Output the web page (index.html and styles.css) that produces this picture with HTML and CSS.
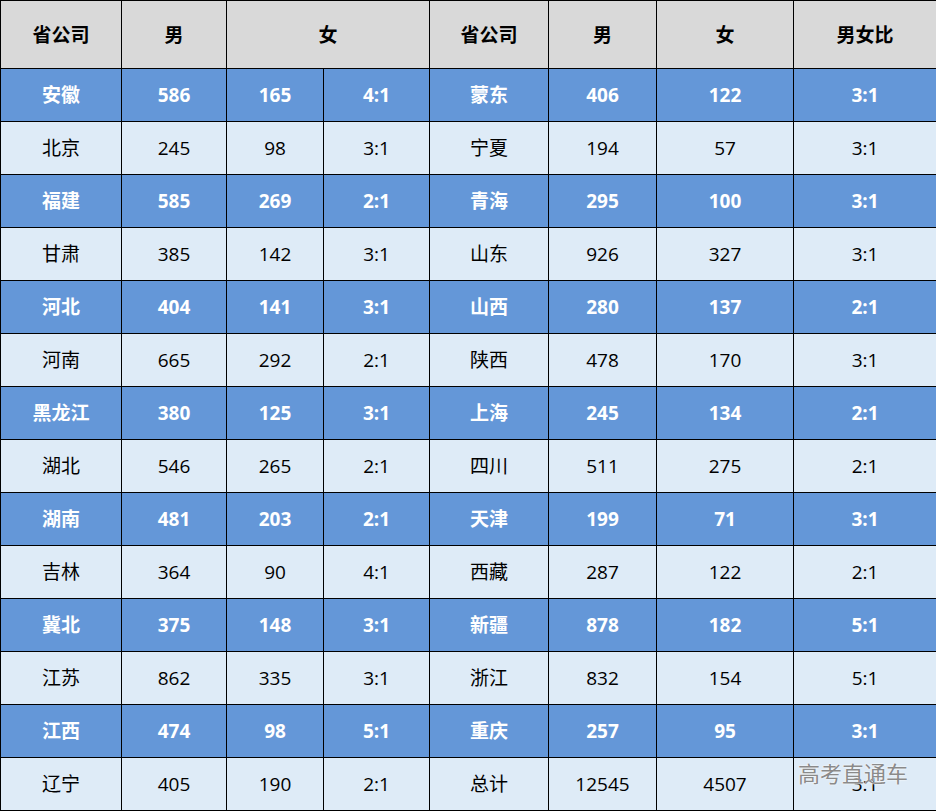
FILE: index.html
```html
<!DOCTYPE html>
<html lang="zh">
<head>
<meta charset="utf-8">
<link rel="stylesheet" href="styles.css">
</head>
<body>
<div class="wrap">
<table class="tbl">
<colgroup>
<col class="c1"><col class="c2"><col class="c3"><col class="c4"><col class="c5"><col class="c6"><col class="c7"><col class="c8">
</colgroup>
<thead>
<tr><th>省公司</th><th>男</th><th colspan="2">女</th><th>省公司</th><th>男</th><th>女</th><th>男女比</th></tr>
</thead>
<tbody>
<tr class="dark"><td>安徽</td><td>586</td><td>165</td><td>4:1</td><td>蒙东</td><td>406</td><td>122</td><td>3:1</td></tr>
<tr class="light"><td>北京</td><td>245</td><td>98</td><td>3:1</td><td>宁夏</td><td>194</td><td>57</td><td>3:1</td></tr>
<tr class="dark"><td>福建</td><td>585</td><td>269</td><td>2:1</td><td>青海</td><td>295</td><td>100</td><td>3:1</td></tr>
<tr class="light"><td>甘肃</td><td>385</td><td>142</td><td>3:1</td><td>山东</td><td>926</td><td>327</td><td>3:1</td></tr>
<tr class="dark"><td>河北</td><td>404</td><td>141</td><td>3:1</td><td>山西</td><td>280</td><td>137</td><td>2:1</td></tr>
<tr class="light"><td>河南</td><td>665</td><td>292</td><td>2:1</td><td>陕西</td><td>478</td><td>170</td><td>3:1</td></tr>
<tr class="dark"><td>黑龙江</td><td>380</td><td>125</td><td>3:1</td><td>上海</td><td>245</td><td>134</td><td>2:1</td></tr>
<tr class="light"><td>湖北</td><td>546</td><td>265</td><td>2:1</td><td>四川</td><td>511</td><td>275</td><td>2:1</td></tr>
<tr class="dark"><td>湖南</td><td>481</td><td>203</td><td>2:1</td><td>天津</td><td>199</td><td>71</td><td>3:1</td></tr>
<tr class="light"><td>吉林</td><td>364</td><td>90</td><td>4:1</td><td>西藏</td><td>287</td><td>122</td><td>2:1</td></tr>
<tr class="dark"><td>冀北</td><td>375</td><td>148</td><td>3:1</td><td>新疆</td><td>878</td><td>182</td><td>5:1</td></tr>
<tr class="light"><td>江苏</td><td>862</td><td>335</td><td>3:1</td><td>浙江</td><td>832</td><td>154</td><td>5:1</td></tr>
<tr class="dark"><td>江西</td><td>474</td><td>98</td><td>5:1</td><td>重庆</td><td>257</td><td>95</td><td>3:1</td></tr>
<tr class="light"><td>辽宁</td><td>405</td><td>190</td><td>2:1</td><td>总计</td><td>12545</td><td>4507</td><td>3:1</td></tr>
</tbody>
</table>
<div class="watermark">高考直通车</div>
</div>
</body>
</html>
```
FILE: styles.css
```css
html, body {
  margin: 0;
  padding: 0;
  background: #ffffff;
}
.wrap {
  position: relative;
  width: 936px;
  height: 811px;
}
.tbl {
  border-collapse: collapse;
  table-layout: fixed;
  width: 936px;
  font-family: "Open Sans", "Noto Sans CJK SC", sans-serif;
  font-size: 19px;
}
.c1 { width: 121px; }
.c2 { width: 105px; }
.c3 { width: 97px; }
.c4 { width: 106px; }
.c5 { width: 119px; }
.c6 { width: 108px; }
.c7 { width: 137px; }
.c8 { width: 143px; }
.tbl th, .tbl td {
  border: 1px solid #000;
  text-align: center;
  vertical-align: middle;
  padding: 0;
  line-height: 24px;
}
.tbl th {
  background: #d9d9d9;
  color: #000;
  font-weight: 700;
  height: 67px;
}
.tbl td {
  height: 52px;
}
.dark td {
  background: #6497d8;
  color: #fff;
  font-weight: 700;
}
.light td {
  background: #deebf7;
  color: #000;
  font-weight: 400;
}
.watermark {
  position: absolute;
  left: 798px;
  top: 756px;
  font-family: "Noto Sans CJK SC", sans-serif;
  font-size: 22px;
  color: #8a8a8a;
  text-shadow: 0 0 2px #fff, 0 0 1px #fff;
}
```
